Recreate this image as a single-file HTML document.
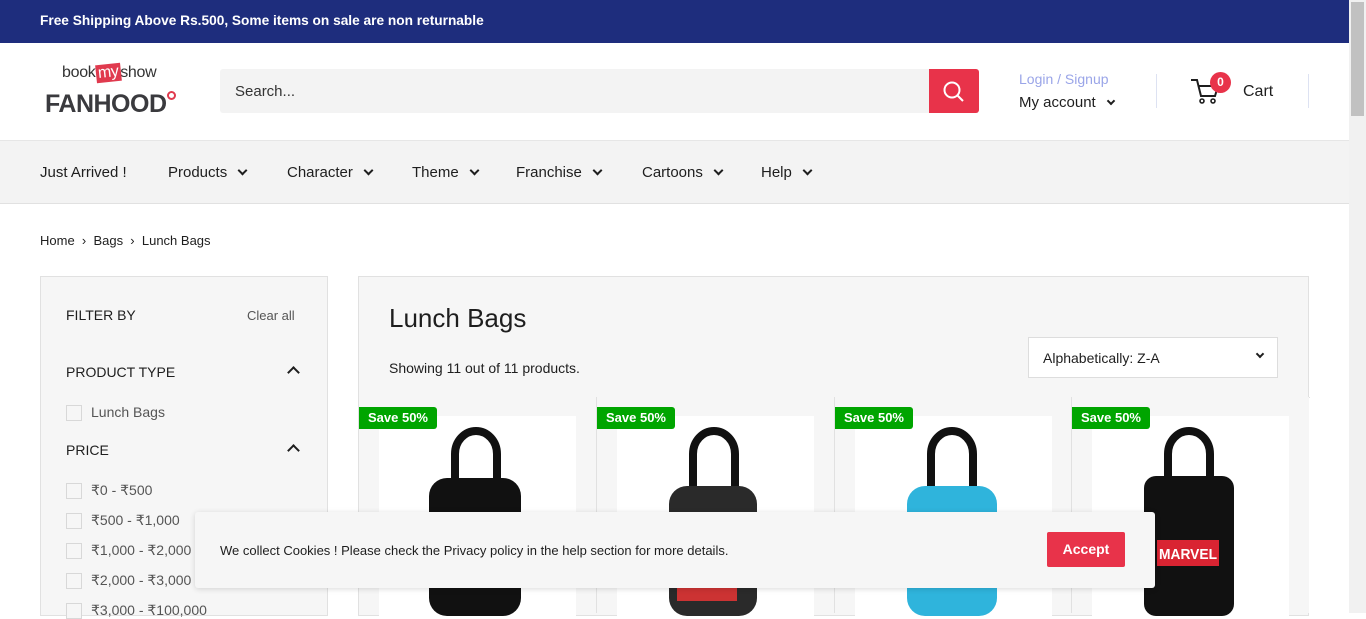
<!DOCTYPE html>
<html><head><meta charset="utf-8"><style>
*{box-sizing:border-box;margin:0;padding:0}
body{width:1366px;height:613px;overflow:hidden;font-family:"Liberation Sans",sans-serif;color:#1e1e1e;background:#fff;position:relative;font-size:14px}
.abs{position:absolute}
.top{left:0;top:0;width:1349px;height:43px;background:#1e2d7d;color:#fff;font-weight:bold;font-size:13.7px;padding:13px 40px}
.sb{left:1349px;top:0;width:17px;height:613px;background:#f1f1f1}
.sb div{position:absolute;left:2px;top:2px;width:13px;height:114px;background:#c1c1c1}
.nav{left:0;top:140px;width:1349px;height:64px;background:#f3f3f3;border-top:1px solid #e6e6e6;border-bottom:1px solid #e1e1e1}
.nav span{position:absolute;top:23px;font-size:15px;color:#1e1e1e}
.chev{display:inline-block;width:7px;height:7px;border-right:2px solid #1e1e1e;border-bottom:2px solid #1e1e1e;transform:rotate(45deg);margin-left:12px;position:relative;top:-3px}
.up{position:absolute;width:9px;height:9px;border-left:2px solid #1e1e1e;border-top:2px solid #1e1e1e;transform:rotate(45deg)}
.side{left:40px;top:276px;width:288px;height:340px;background:#f6f6f6;border:1px solid #e1e1e1}
.main{left:358px;top:276px;width:951px;height:340px;background:#f6f6f6;border:1px solid #e1e1e1}
.cb{position:absolute;left:25px;width:16px;height:16px;border:1px solid #d8d8d8;background:#f6f6f6}
.lbl{position:absolute;left:50px;color:#555;font-size:14px}
.card{position:absolute;top:397px;width:238px;height:216px;border-left:1px solid #e1e1e1;background:#f6f6f6}
.card .img{position:absolute;left:20px;top:19px;width:197px;height:200px;background:#fff}
.save{position:absolute;left:0;top:10px;background:#00a500;color:#fff;font-weight:bold;font-size:13px;padding:2px 9px;border-radius:0 3px 3px 0;height:22px;line-height:18px}
</style></head><body>
<div class="abs top">Free Shipping Above Rs.500, Some items on sale are non returnable</div>
<div class="abs sb"><div></div></div>

<div class="abs" style="left:62px;top:64px;font-size:16px;color:#333;letter-spacing:-0.3px">book<span style="background:#e03a4e;color:#fff;padding:0 2px;transform:rotate(-6deg);display:inline-block">my</span>show</div>
<div class="abs" style="left:45px;top:90px;font-size:25px;font-weight:bold;color:#3a3a3e;letter-spacing:-0.5px">FANHOOD</div>
<div class="abs" style="left:167px;top:91px;width:9px;height:9px;border:2px solid #e03a4e;border-radius:50%"></div>

<div class="abs" style="left:220px;top:69px;width:709px;height:44px;background:#f3f3f3;border-radius:3px 0 0 3px;padding:14px 15px;font-size:15px;color:#333">Search...</div>
<div class="abs" style="left:929px;top:69px;width:50px;height:44px;background:#e8334a;border-radius:0 3px 3px 0">
<svg width="50" height="44"><circle cx="23" cy="21" r="7.5" fill="none" stroke="#fff" stroke-width="2"/><line x1="28.5" y1="26.5" x2="34" y2="32" stroke="#fff" stroke-width="2"/></svg></div>
<div class="abs" style="left:1019px;top:71px;color:#9aa5e8;font-size:14px">Login / Signup</div>
<div class="abs" style="left:1019px;top:94px;font-size:15px">My account <span class="chev" style="margin-left:8px;width:6px;height:6px"></span></div>
<div class="abs" style="left:1156px;top:74px;width:1px;height:34px;background:#dde2f2"></div>
<div class="abs" style="left:1308px;top:74px;width:1px;height:34px;background:#dde2f2"></div>
<svg class="abs" style="left:1190px;top:78px" width="34" height="28"><path d="M1 2h6l4 16h14l3-10H9" fill="none" stroke="#1e1e1e" stroke-width="2"/><circle cx="12" cy="23" r="2" fill="none" stroke="#1e1e1e" stroke-width="1.6"/><circle cx="23" cy="23" r="2" fill="none" stroke="#1e1e1e" stroke-width="1.6"/></svg>
<div class="abs" style="left:1210px;top:72px;width:21px;height:21px;border-radius:50%;background:#e8334a;color:#fff;font-size:12px;font-weight:bold;text-align:center;line-height:21px">0</div>
<div class="abs" style="left:1243px;top:83px;font-size:16px">Cart</div>

<div class="abs nav">
<span style="left:40px">Just Arrived !</span>
<span style="left:168px">Products<i class="chev"></i></span>
<span style="left:287px">Character<i class="chev"></i></span>
<span style="left:412px">Theme<i class="chev"></i></span>
<span style="left:516px">Franchise<i class="chev"></i></span>
<span style="left:642px">Cartoons<i class="chev"></i></span>
<span style="left:761px">Help<i class="chev"></i></span>
</div>
<div class="abs" style="left:40px;top:233px;font-size:13px">Home&nbsp; › &nbsp;Bags&nbsp; › &nbsp;Lunch Bags</div>

<div class="abs side">
<div class="abs" style="left:25px;top:30px;font-size:14px">FILTER BY</div>
<div class="abs" style="left:206px;top:31px;font-size:13px;color:#555">Clear all</div>
<div class="abs" style="left:25px;top:87px;font-size:14px">PRODUCT TYPE</div>
<i class="up" style="left:248px;top:91px"></i>
<div class="cb" style="top:128px"></div><div class="lbl" style="top:127px">Lunch Bags</div>
<div class="abs" style="left:25px;top:165px;font-size:14px">PRICE</div>
<i class="up" style="left:248px;top:169px"></i>
<div class="cb" style="top:206px"></div><div class="lbl" style="top:205px">₹0 - ₹500</div>
<div class="cb" style="top:236px"></div><div class="lbl" style="top:235px">₹500 - ₹1,000</div>
<div class="cb" style="top:266px"></div><div class="lbl" style="top:265px">₹1,000 - ₹2,000</div>
<div class="cb" style="top:296px"></div><div class="lbl" style="top:295px">₹2,000 - ₹3,000</div>
<div class="cb" style="top:326px"></div><div class="lbl" style="top:325px">₹3,000 - ₹100,000</div>
</div>

<div class="abs main">
<div class="abs" style="left:30px;top:26px;font-size:26px;color:#1e1e1e">Lunch Bags</div>
<div class="abs" style="left:30px;top:83px;font-size:14px">Showing 11 out of 11 products.</div>
<div class="abs" style="left:669px;top:60px;width:250px;height:41px;background:#fff;border:1px solid #ddd;padding:12px 14px;font-size:14px">Alphabetically: Z-A<i class="chev" style="position:absolute;right:14px;top:13px;width:6px;height:6px;margin:0"></i></div>
<div class="abs" style="left:0;top:120px;width:951px;height:1px;background:#e1e1e1"></div>
</div>

<div class="card" style="left:359px;border-left:none"><div class="img"><svg width="197" height="200"><path d="M76 72V38a21 23 0 0 1 42 0v34" fill="none" stroke="#111" stroke-width="8"/><rect x="50" y="62" width="92" height="138" rx="18" fill="#111"/></svg></div><div class="save">Save 50%</div></div>
<div class="card" style="left:596px"><div class="img"><svg width="197" height="200"><path d="M76 72V38a21 23 0 0 1 42 0v34" fill="none" stroke="#111" stroke-width="8"/><rect x="52" y="70" width="88" height="130" rx="18" fill="#2a2a2a"/><rect x="60" y="165" width="60" height="20" fill="#c33"/></svg></div><div class="save">Save 50%</div></div>
<div class="card" style="left:834px"><div class="img"><svg width="197" height="200"><path d="M76 72V38a21 23 0 0 1 42 0v34" fill="none" stroke="#111" stroke-width="8"/><rect x="52" y="70" width="90" height="130" rx="18" fill="#2fb4dc"/></svg></div><div class="save">Save 50%</div></div>
<div class="card" style="left:1071px"><div class="img"><svg width="197" height="200"><path d="M76 72V38a21 23 0 0 1 42 0v34" fill="none" stroke="#111" stroke-width="8"/><rect x="52" y="60" width="90" height="140" rx="12" fill="#111"/><rect x="65" y="124" width="62" height="26" fill="#d92432"/><text x="96" y="143" text-anchor="middle" fill="#fff" font-weight="bold" font-size="15" font-family="Liberation Sans" textLength="58" lengthAdjust="spacingAndGlyphs">MARVEL</text></svg></div><div class="save">Save 50%</div></div>

<div class="abs" style="left:195px;top:512px;width:960px;height:76px;background:#f6f6f6;border-radius:3px;box-shadow:0 1px 6px rgba(0,0,0,.15)">
<div class="abs" style="left:25px;top:31px;font-size:13px;color:#1e1e1e">We collect Cookies ! Please check the Privacy policy in the help section for more details.</div>
<div class="abs" style="left:852px;top:20px;width:78px;height:35px;background:#e8334a;border-radius:2px;color:#fff;font-weight:bold;font-size:14px;text-align:center;line-height:35px">Accept</div>
</div>
</body></html>
